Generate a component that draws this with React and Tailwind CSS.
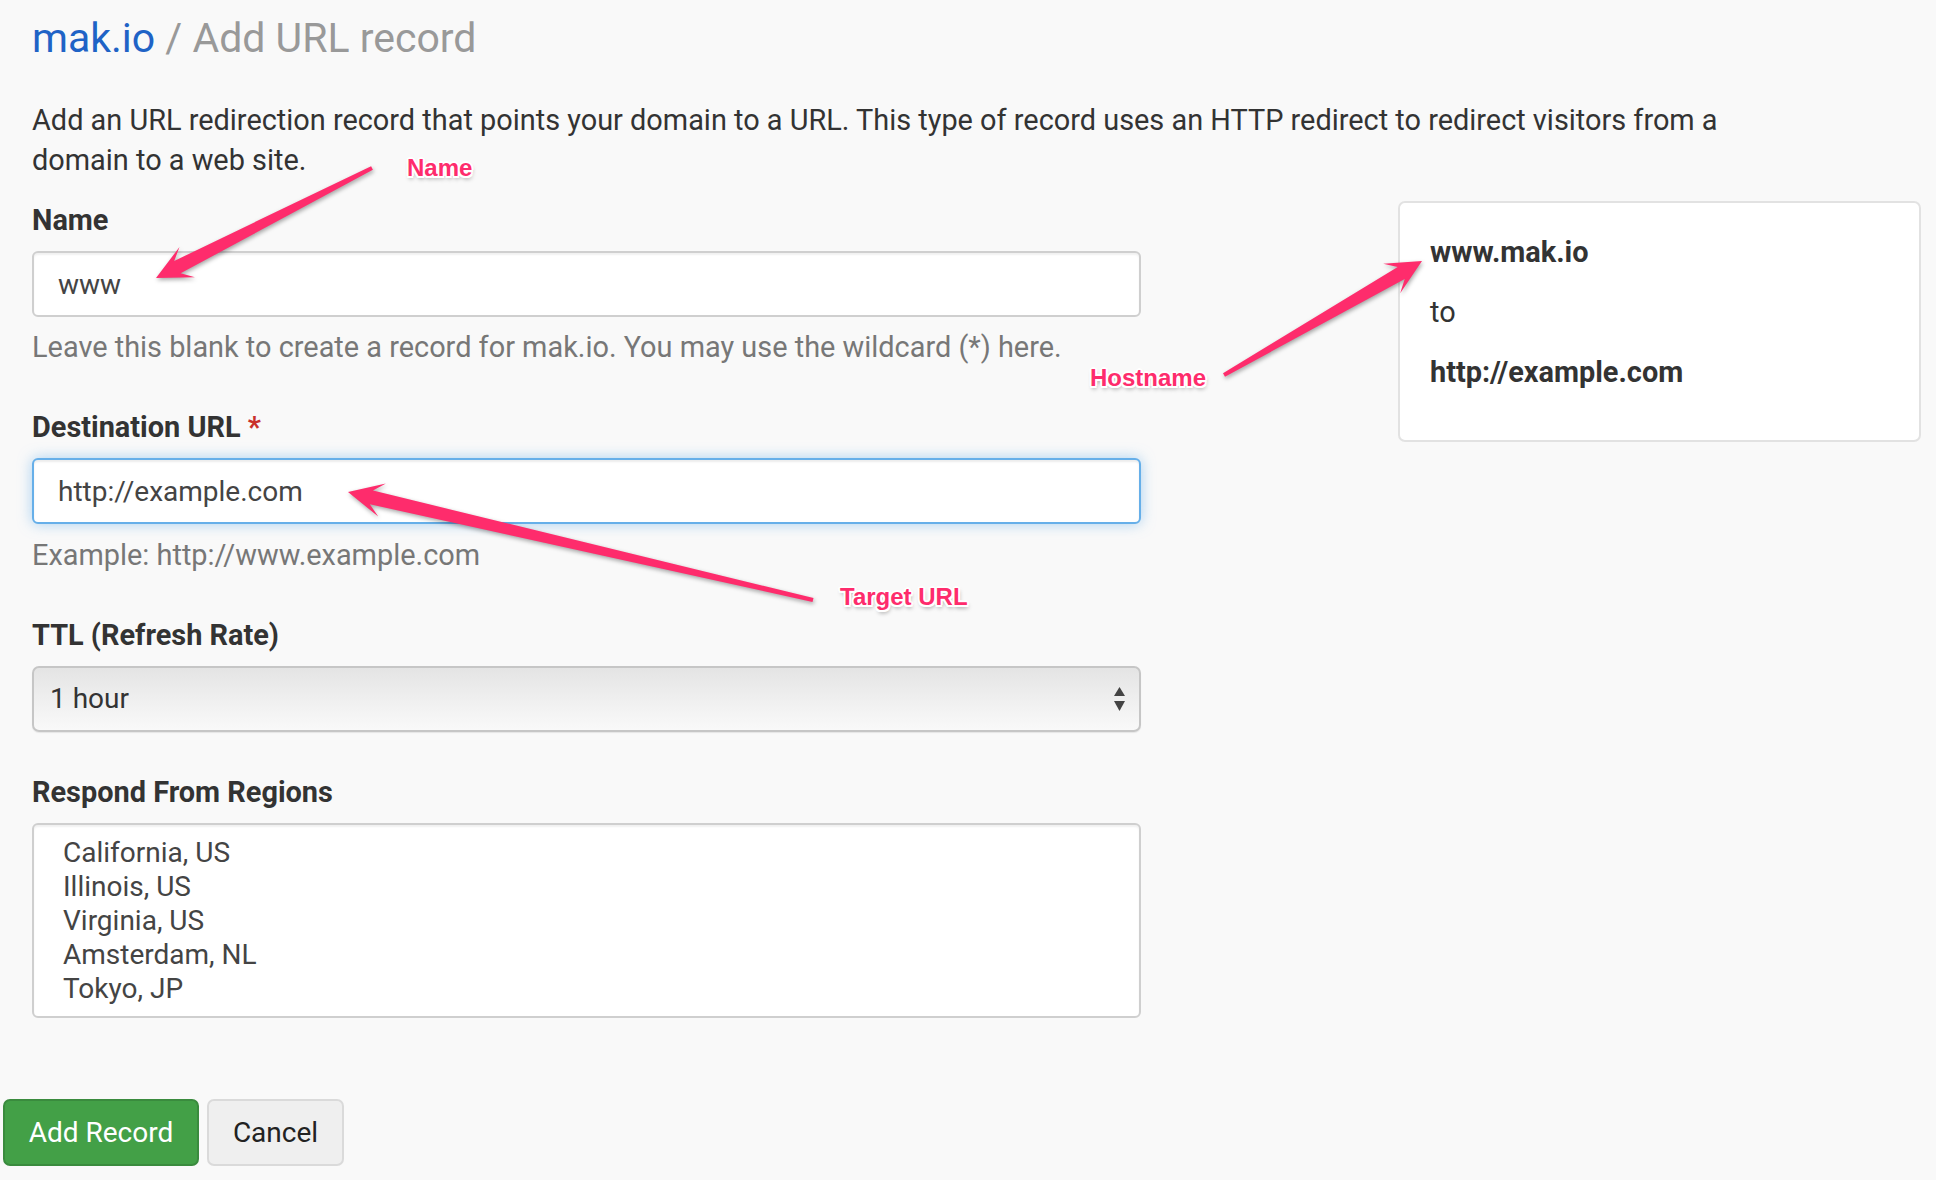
import React from 'react';

const PINK = '#fe2c6c';

// skitch-style arrow: thin tail widening into a swept head at (px, py)
function arrowPoints(tx, ty, px, py) {
  const dx = px - tx;
  const dy = py - ty;
  const len = Math.hypot(dx, dy);
  const ux = dx / len;
  const uy = dy / len;
  const nx = -uy;
  const ny = ux;
  const pt = (along, side) =>
    `${(px + ux * along + nx * side).toFixed(1)},${(py + uy * along + ny * side).toFixed(1)}`;
  return [
    pt(-len, 2),
    pt(-24, 7),
    pt(-35, 17),
    pt(0, 0),
    pt(-35, -17),
    pt(-24, -7),
    pt(-len, -2),
  ].join(' ');
}

const arrows = [
  { id: 'name', tail: [372, 168], tip: [156, 278] },
  { id: 'host', tail: [1224, 375], tip: [1422, 261] },
  { id: 'target', tail: [813, 600], tip: [348, 492] },
];

const labels = [
  { text: 'Name', className: 'left-[407px] top-[156px]' },
  { text: 'Hostname', className: 'left-[1090px] top-[366px]' },
  { text: 'Target URL', className: 'left-[840px] top-[585px]' },
];

const regions = ['California, US', 'Illinois, US', 'Virginia, US', 'Amsterdam, NL', 'Tokyo, JP'];

function FieldLabel({ children, required }) {
  return (
    <label className="block font-bold text-[28.9px] leading-[40px] mb-[11px] text-[#333]">
      {children}
      {required && <span className="text-[#c9302c]"> *</span>}
    </label>
  );
}

export default function App() {
  return (
    <div className="relative min-h-screen w-full overflow-hidden bg-[#f9f9f9] font-['Roboto',sans-serif] text-[28px] text-[#333] pl-8 pt-[15px]">
      <h1 className="text-[41px] leading-[46px] font-normal">
        <span className="text-[#1f63c6]">mak.io</span>
        <span className="text-[#999]"> / Add URL record</span>
      </h1>

      <p className="mt-[39px] w-[1720px] text-[28.9px] leading-[40px] text-[#333]">
        Add an URL redirection record that points your domain to a URL. This type of record uses an HTTP redirect to redirect visitors from a domain to a web site.
      </p>

      <div className="mt-5 flex items-start">
        {/* Form column */}
        <div className="w-[1109px] shrink-0">
          <div className="mb-10">
            <FieldLabel>Name</FieldLabel>
            <input
              readOnly
              value="www"
              className="block w-full h-[66px] px-[24px] bg-white border-2 border-[#cfcfcf] rounded-[6px] text-[28px] text-[#444] outline-none shadow-[inset_0_2px_2px_rgba(0,0,0,0.06)]"
            />
            <p className="mt-[10px] text-[28.9px] leading-[40px] text-[#777]">
              Leave this blank to create a record for mak.io. You may use the wildcard (*) here.
            </p>
          </div>

          <div className="mb-10">
            <FieldLabel required>Destination URL</FieldLabel>
            <input
              readOnly
              value="http://example.com"
              className="block w-full h-[66px] px-[24px] bg-white border-2 border-[#66afe9] rounded-[6px] text-[28px] text-[#444] outline-none shadow-[inset_0_2px_2px_rgba(0,0,0,0.075),0_0_14px_rgba(102,175,233,0.55)]"
            />
            <p className="mt-[11px] text-[28.9px] leading-[40px] text-[#777]">Example: http://www.example.com</p>
          </div>

          <div className="mb-10">
            <FieldLabel>TTL (Refresh Rate)</FieldLabel>
            <div className="flex items-center justify-between h-[66px] pl-[16px] pr-[14px] border-2 border-[#c6c6c6] rounded-[7px] bg-gradient-to-b from-[#e4e4e4] via-[#efefef] to-[#f9f9f9] shadow-[0_1px_1px_rgba(0,0,0,0.08)]">
              <span className="text-[#333]">1 hour</span>
              <svg width="11" height="24" viewBox="0 0 11 24" className="text-[#444]">
                <polygon points="5.5,0 11,9 0,9" fill="currentColor" />
                <polygon points="0,14 11,14 5.5,24" fill="currentColor" />
              </svg>
            </div>
          </div>

          <div>
            <FieldLabel>Respond From Regions</FieldLabel>
            <div className="h-[195px] bg-white border-2 border-[#cfcfcf] rounded-[6px] pl-[29px] pt-[11px] text-[#444] shadow-[inset_0_2px_2px_rgba(0,0,0,0.06)]">
              {regions.map((r) => (
                <div key={r} className="leading-[34px]">{r}</div>
              ))}
            </div>
          </div>

          <div className="mt-[81px] -ml-[29px] flex gap-2">
            <button className="h-[67px] w-[196px] rounded-[7px] bg-[#43a047] border-2 border-[#3a8b3e] text-white text-[28px]">
              Add Record
            </button>
            <button className="h-[67px] w-[137px] rounded-[7px] bg-[#efefef] border-2 border-[#dadada] text-[#222] text-[28px]">
              Cancel
            </button>
          </div>
        </div>

        {/* Preview panel */}
        <div className="ml-[257px] mt-px w-[523px] shrink-0 bg-white border-2 border-[#e2e2e2] rounded-[7px] pl-[30px] pt-[29px] pb-[28px] text-[28.9px]">
          <p className="leading-[40px] mb-5 font-bold text-[#333]">www.mak.io</p>
          <p className="leading-[40px] mb-5 text-[#333]">to</p>
          <p className="leading-[40px] mb-5 font-bold text-[#333]">http://example.com</p>
        </div>
      </div>

      {/* Annotations */}
      <svg
        className="absolute left-0 top-0 pointer-events-none drop-shadow-[1px_2px_2px_rgba(0,0,0,0.35)]"
        width="1936"
        height="1180"
      >
        {arrows.map((a) => (
          <polygon key={a.id} points={arrowPoints(a.tail[0], a.tail[1], a.tip[0], a.tip[1])} fill={PINK} />
        ))}
      </svg>
      {labels.map((l) => (
        <span
          key={l.text}
          className={`absolute ${l.className} font-['Liberation_Sans',sans-serif] font-bold text-[24px] leading-[24px] text-[#fe2c6c] whitespace-nowrap [text-shadow:2px_0_0_#fff,-2px_0_0_#fff,0_2px_0_#fff,0_-2px_0_#fff,1.5px_1.5px_0_#fff,-1.5px_-1.5px_0_#fff,1.5px_-1.5px_0_#fff,-1.5px_1.5px_0_#fff,1px_3px_4px_rgba(0,0,0,0.4)]`}
        >
          {l.text}
        </span>
      ))}
    </div>
  );
}
